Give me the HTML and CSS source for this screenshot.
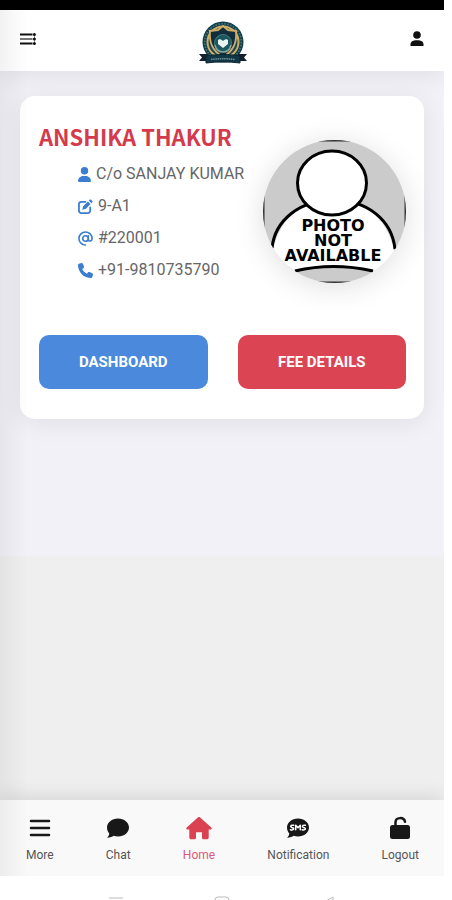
FILE: index.html
```html
<!DOCTYPE html>
<html lang="en">
<head>
    <meta charset="UTF-8">
    <meta name="viewport" content="width=device-width, initial-scale=1.0">
    <title>Student Home</title>
    <link rel="stylesheet" href="styles.css">
</head>
<body>
    <div class="screen">
        <div class="status-bar"></div>
        <header class="header">
            <button type="button" class="icon-btn" aria-label="Menu">
                <svg width="16" height="14" viewBox="0 0 16 14">
                    <path d="M0 2.500h12.500M0 11.500h12.500" stroke="#111" stroke-width="2"/>
                    <path d="M0 7h12.500" stroke="#777" stroke-width="2"/>
                    <path d="M14.500 1v12" stroke="#999" stroke-width="1"/>
                    <circle cx="14.400" cy="2.500" r="1.500" fill="#111"/>
                    <circle cx="14.400" cy="7" r="1.500" fill="#111"/>
                    <circle cx="14.400" cy="11.500" r="1.500" fill="#111"/>
                </svg>
            </button>
            <a href="#" class="logo" aria-label="School">
                <svg width="48" height="44" viewBox="0 0 48 44">
                    <circle cx="24" cy="21" r="20.500" fill="#123f4c"/>
                    <circle cx="24" cy="21" r="18.300" fill="none" stroke="#527779" stroke-width="1.500" stroke-dasharray="1.500 1.500"/>
                    <circle cx="24" cy="21" r="15.500" fill="#174652" stroke="#cfab68" stroke-width="2"/>
                    <path d="M24 5l5 4 8 1c1 10-1 19-13 26C12 29 10 20 11 10l8-1z" fill="#122d3b" stroke="#cfab68" stroke-width="2"/>
                    <circle cx="24" cy="22" r="8.500" fill="#1d5660" stroke="#47777a" stroke-width="1"/>
                    <path d="M24 20c-2-2-4-2-5-1v4l5 4 5-4v-4c-1-1-3-1-5 1z" fill="#e9f3f1"/>
                    <path d="M16 24c1 5 4 7 8 7s7-2 8-7" fill="none" stroke="#83a59c" stroke-width="1.500"/>
                    <path d="M0 33h9v7H0l3-3.500zM48 33h-9v7h9l-3-3.500z" fill="#14202b"/>
                    <path d="M7 35c11-2 23-2 34 0v7c-11-1.500-23-1.500-34 0z" fill="#123645" stroke="#0c2732" stroke-width="1"/>
                    <path d="M12 38.500c8-1 16-1 24 0" fill="none" stroke="#6c919a" stroke-width="1.500" stroke-dasharray="1.500 .7"/>
                </svg>
            </a>
            <button type="button" class="icon-btn" aria-label="Profile">
                <svg width="14" height="16" viewBox="0 0 14 16">
                    <circle cx="7" cy="4" r="3.800" fill="#111"/>
                    <path d="M.5 15v-1.500C.5 10.500 3 9.300 7 9.300s6.500 1.200 6.500 4.200V15z" fill="#111"/>
                </svg>
            </button>
        </header>

        <main class="content">
            <section class="profile">
                <div class="card">
                    <div class="card-top">
                        <div class="info">
                            <h1>ANSHIKA THAKUR</h1>
                            <ul class="details">
                                <li>
                                    <svg width="13" height="15" viewBox="0 0 448 512"><path d="M224 256a128 128 0 1 0 0-256 128 128 0 1 0 0 256zm-46 48C80 304 0 384 0 482c0 17 13 30 30 30h388c17 0 30-13 30-30 0-98-80-178-178-178z"/></svg>
                                    <span>C/o SANJAY KUMAR</span>
                                </li>
                                <li>
                                    <svg width="15" height="15" viewBox="0 0 16 16"><path d="M8 3H3.500A2.500 2.500 0 0 0 1 5.500v7A2.500 2.500 0 0 0 3.500 15h7a2.500 2.500 0 0 0 2.500-2.500V9" fill="none" stroke="#3b7dd1" stroke-width="1.900" stroke-linecap="round"/><path d="M10.600 2.600l2.800 2.800-5.200 5.200-3.700.9.900-3.700zM11.500 1.700l.8-.8c.6-.6 1.300-.6 1.800 0l1 1c.6.600.6 1.300 0 1.800l-.8.8z"/></svg>
                                    <span>9-A1</span>
                                </li>
                                <li>
                                    <svg width="15" height="15" viewBox="0 0 16 16"><g fill="none" stroke="#3b7dd1" stroke-width="1.700" stroke-linecap="round"><circle cx="8" cy="8" r="3"/><path d="M11 5v4c0 2.600 4 2.300 4-1a7 7 0 1 0-7 7"/></g></svg>
                                    <span>#220001</span>
                                </li>
                                <li>
                                    <svg width="15" height="15" viewBox="0 0 512 512"><path d="M165 25c-8-19-29-29-49-24L28 25C12 30 0 45 0 64c0 247 201 448 448 448 19 0 34-12 39-28l24-88c5-20-5-41-24-49l-96-40c-16-7-35-2-46 12l-40 49c-71-33-128-91-161-161l49-40c14-12 19-30 12-46z"/></svg>
                                    <span>+91-9810735790</span>
                                </li>
                            </ul>
                        </div>
                        <div class="photo">
                            <svg viewBox="0 0 143 143" role="img" aria-label="Photo not available">
                                <rect width="143" height="143" fill="#cbcbcb" stroke="#333" stroke-width="3"/>
                                <path d="M8 134C7 87 32 60 70.500 60S134 87 133 134Q112 130 70 127 40 128 8 134z" fill="#fff"/>
                                <path d="M9 108C12 80 37 60 70.500 60S129 80 132 109" fill="none" stroke="#000" stroke-width="3"/>
                                <path d="M32 131q38-9 78 0" fill="none" stroke="#000" stroke-width="3"/>
                                <ellipse cx="69" cy="43" rx="34.500" ry="32" fill="#fff" stroke="#000" stroke-width="3"/>
                                <text class="photo-text"><tspan x="70" y="91">PHOTO</tspan><tspan x="70" y="106">NOT</tspan><tspan x="70" y="121">AVAILABLE</tspan></text>
                            </svg>
                        </div>
                    </div>
                    <div class="actions">
                        <button type="button" class="btn btn-blue">DASHBOARD</button>
                        <button type="button" class="btn btn-red">FEE DETAILS</button>
                    </div>
                </div>
            </section>
        </main>

        <nav class="bottom-nav">
            <a href="#">
                <svg width="24" height="24" viewBox="0 0 24 24"><path d="M3 5h18M3 12h18M3 19h18" stroke="#181818" stroke-width="2.500" stroke-linecap="round"/></svg>
                More
            </a>
            <a href="#">
                <svg width="24" height="24" viewBox="0 0 24 24"><path d="M12 2.500c6.100 0 11 4 11 9s-4.900 9-11 9c-1.500 0-3-.2-4.300-.7C6.500 20.700 4 21.800 1 21.800c1.500-1.400 2.200-2.800 2.300-4.300C1.800 15.900 1 13.800 1 11.500c0-5 4.900-9 11-9z" fill="#181818"/></svg>
                Chat
            </a>
            <a href="#" class="active">
                <svg width="26" height="24" viewBox="0 0 26 24"><path d="M12.100 1.300c.5-.5 1.300-.5 1.800 0L25.300 11.500c.8.900.4 2-.8 2h-1.800v8c0 1.100-.8 1.800-1.800 1.800h-3.400c-.9 0-1.500-.7-1.500-1.500v-5.600h-6v5.600c0 .8-.6 1.500-1.500 1.500H5.100c-1 0-1.800-.7-1.800-1.800v-8H1.500c-1.200 0-1.600-1.100-.8-2z" fill="#db4251"/></svg>
                Home
            </a>
            <a href="#">
                <svg width="24" height="24" viewBox="0 0 24 24"><path d="M12 2.500c6.100 0 11 4 11 9s-4.900 9-11 9c-1.500 0-3-.2-4.300-.7C6.500 20.700 4 21.800 1 21.800c1.500-1.400 2.200-2.800 2.300-4.300C1.800 15.900 1 13.800 1 11.500c0-5 4.900-9 11-9z" fill="#181818"/><g fill="none" stroke="#fff" stroke-width="1.500" stroke-linecap="round" stroke-linejoin="round"><path d="M7.700 9.300c-3.600-.7-3.600 1.700-1.800 2.200 3 .6 2 3-1.500 2.200"/><path d="M9.700 13.700V9.200l2.300 2.600 2.300-2.600v4.500"/><path d="M19.400 9.300c-3.600-.7-3.600 1.700-1.800 2.200 3 .6 2 3-1.500 2.200"/></g></svg>
                Notification
            </a>
            <a href="#">
                <svg width="24" height="24" viewBox="0 0 24 24"><path d="M7.500 11V6.500c0-5.600 8.500-5.800 9.500-.8" fill="none" stroke="#181818" stroke-width="2.500" stroke-linecap="round"/><rect x="2" y="9" width="20" height="14" rx="2.500" fill="#181818"/></svg>
                Logout
            </a>
        </nav>

        <div class="system-bar">
            <svg width="16" height="16" viewBox="0 0 16 16"><path d="M1 2h14M1 8h14M1 14h14"/></svg>
            <svg width="16" height="16" viewBox="0 0 16 16"><rect x="1" y="1" width="14" height="14" rx="3"/></svg>
            <svg width="16" height="16" viewBox="0 0 16 16"><path d="M13 1v14L1 8z"/></svg>
        </div>
    </div>
</body>
</html>
```
FILE: styles.css
```css
* {
    box-sizing: border-box;
}
body {
    font-family: Roboto, Arial, sans-serif;
    background-color: #fff;
    margin: 0;
    padding-right: 8px;
}
.screen {
    position: relative;
    display: flex;
    flex-direction: column;
    min-height: 100vh;
    overflow: hidden;
}
/* soft shade along the left edge */
.screen::before {
    content: "";
    position: absolute;
    top: 10px;
    bottom: 24px;
    left: 0;
    width: 28px;
    background: linear-gradient(to right, rgba(0, 0, 0, 0.05), rgba(0, 0, 0, 0));
    pointer-events: none;
    z-index: 2;
}
button {
    font-family: inherit;
    border: none;
    padding: 0;
    cursor: pointer;
}
svg {
    display: block;
}
.status-bar {
    height: 10px;
    background-color: #000;
}
.header {
    position: relative;
    display: flex;
    align-items: center;
    justify-content: space-between;
    height: 61px;
    padding: 0 20px;
    background-color: #fff;
    box-shadow: 0 4px 24px rgba(0, 0, 0, 0.08);
}
.icon-btn {
    background: none;
    padding-bottom: 3px;
}
.logo {
    padding-top: 4px;
}
.content {
    flex: 1;
    background-color: #efefef;
}
.profile {
    padding: 25px 20px 137px;
    background-color: #f2f1f7;
}
.card {
    padding: 18px 18px 30px 19px;
    background-color: #fff;
    border-radius: 15px;
    box-shadow: 0 4px 24px rgba(0, 0, 0, 0.08);
}
.card-top {
    display: flex;
    justify-content: space-between;
}
.info {
    white-space: nowrap;
}
h1 {
    margin: 0;
    font-family: "Noto Sans CJK SC", sans-serif;
    font-size: 22px;
    font-weight: bold;
    line-height: 44px;
    color: #d53a4c;
}
.details {
    list-style: none;
    margin: 0;
    padding: 0 0 0 39px;
}
.details li {
    display: flex;
    align-items: center;
    gap: 5px;
    font-size: 16px;
    line-height: 32px;
    color: #666;
}
.details svg {
    fill: #3b7dd1;
}
.photo {
    flex-shrink: 0;
    width: 143px;
    height: 143px;
    margin-top: 26px;
    border-radius: 50%;
    box-shadow: 0 4px 30px rgba(0, 0, 0, 0.13);
}
.photo svg {
    border-radius: 50%;
}
.photo-text {
    font-family: "DejaVu Sans", sans-serif;
    font-size: 16px;
    font-weight: bold;
    text-anchor: middle;
}
.actions {
    display: flex;
    gap: 30px;
    margin-top: 49px;
}
.btn {
    flex: 1;
    height: 54px;
    border-radius: 10px;
    font-size: 15px;
    font-weight: bold;
    color: #fff;
}
.btn-blue {
    background-color: #4a89dc;
}
.btn-red {
    background-color: #da4453;
}
.bottom-nav {
    position: relative;
    display: flex;
    align-items: center;
    justify-content: space-between;
    height: 76px;
    padding: 3px 25px 0 26px;
    background-color: #f9f9f9;
    box-shadow: 0 -2px 20px rgba(0, 0, 0, 0.12);
}
.bottom-nav a {
    display: flex;
    flex-direction: column;
    align-items: center;
    gap: 7px;
    font-size: 12px;
    line-height: 16px;
    color: #555;
    text-decoration: none;
}
.bottom-nav .active {
    color: #db5a78;
}
.system-bar {
    position: relative;
    display: flex;
    justify-content: space-between;
    height: 24px;
    padding: 20px 108px 0;
    background-color: #fff;
    overflow: hidden;
}
.system-bar svg {
    fill: none;
    stroke: #bbb;
    stroke-width: 1;
}
```
